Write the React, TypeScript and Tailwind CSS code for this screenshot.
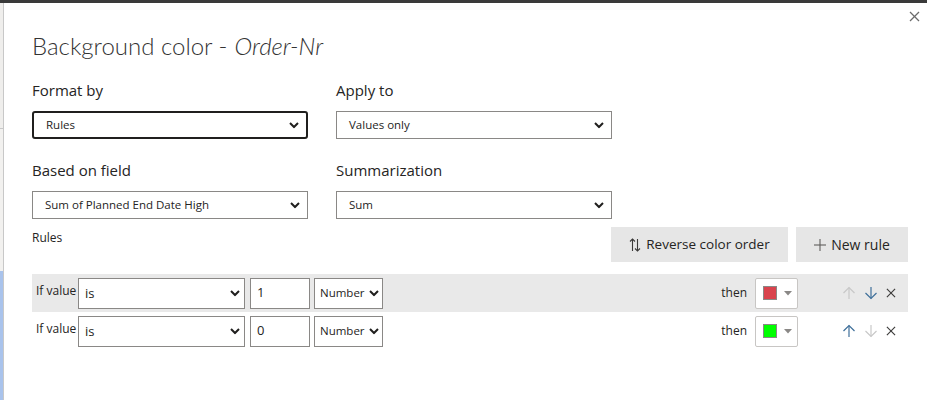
import React from "react";

const font = { fontFamily: '"Open Sans", "Noto Sans", sans-serif' };

const Chevron = ({ className = "" }: { className?: string }) => (
  <svg width="10" height="7" viewBox="0 0 10 7" className={className}>
    <polyline points="1,1.5 5,5.5 9,1.5" fill="none" stroke="#201f1e" strokeWidth="2" />
  </svg>
);

const Select = ({ value, focused = false }: { value: string; focused?: boolean }) => (
  <div
    className={`relative h-[28px] w-[276px] flex items-center pl-[12px] text-[11.5px] text-[#252423] bg-white ${
      focused ? "border-2 border-[#201f1e] rounded-[3px] pl-[11px]" : "border border-[#8a8886]"
    }`}
  >
    {value}
    <Chevron className="absolute right-[7px] top-1/2 -translate-y-1/2" />
  </div>
);

const Field = ({ label, value, focused }: { label: string; value: string; focused?: boolean }) => (
  <div className="flex flex-col">
    <div className="h-[20px] flex items-center text-[15px] text-[#252423]">{label}</div>
    <div className="mt-[11px]">
      <Select value={value} focused={focused} />
    </div>
  </div>
);

const Arrow = ({ dir, enabled }: { dir: "up" | "down"; enabled: boolean }) => (
  <svg width="14" height="14" viewBox="0 0 14 14" className={dir === "down" ? "rotate-180" : ""}>
    <g fill="none" stroke={enabled ? "#3e6f9a" : "#c8c8c8"} strokeWidth="1.2">
      <line x1="7" y1="1.5" x2="7" y2="13" />
      <polyline points="1.5,7 7,1.5 12.5,7" />
    </g>
  </svg>
);

const Cross = ({ size = 11, color = "#3b3a39" }: { size?: number; color?: string }) => (
  <svg width={size} height={size} viewBox="0 0 11 11">
    <g stroke={color} strokeWidth="1.2">
      <line x1="1" y1="1" x2="10" y2="10" />
      <line x1="10" y1="1" x2="1" y2="10" />
    </g>
  </svg>
);

const RuleRow = ({
  value,
  color,
  upEnabled,
  downEnabled,
  shaded,
}: {
  value: string;
  color: string;
  upEnabled: boolean;
  downEnabled: boolean;
  shaded?: boolean;
}) => (
  <div className={`h-[38px] w-[876px] flex items-center ${shaded ? "bg-[#e9e9e9]" : "bg-white"}`}>
    <span className="ml-[4px] w-[42px] text-[12px] text-[#252423] -mt-[4px]">If value</span>
    <div className="relative h-[31px] w-[167px] border border-[#8a8886] bg-white flex items-center pl-[6px] text-[13px] text-[#252423] pt-[2px]">
      is
      <Chevron className="absolute right-[4px] top-1/2 -translate-y-1/2" />
    </div>
    <div className="ml-[5px] h-[31px] w-[60px] border border-[#8a8886] bg-white flex items-center pl-[6px] text-[13px] text-[#252423]">
      {value}
    </div>
    <div className="relative ml-[4px] h-[31px] w-[69px] border border-[#8a8886] bg-white flex items-center pl-[5px] text-[11.5px] text-[#252423]">
      Number
      <Chevron className="absolute right-[3px] top-1/2 -translate-y-1/2" />
    </div>
    <div className="flex-1" />
    <span className="text-[12px] text-[#252423]">then</span>
    <div className="ml-[8px] h-[31px] w-[43px] border border-[#c8c6c4] rounded-[2px] bg-white flex items-center pl-[7px]">
      <div className="w-[14px] h-[14px] border border-[#8a8886]" style={{ backgroundColor: color }} />
      <svg width="8" height="5" viewBox="0 0 8 5" className="ml-[7px]">
        <polygon points="0,0 8,0 4,4.5" fill="#8a8886" />
      </svg>
    </div>
    <div className="ml-[44px] flex items-center gap-[8px] mr-[12px]">
      <Arrow dir="up" enabled={upEnabled} />
      <Arrow dir="down" enabled={downEnabled} />
      <Cross size={10} />
    </div>
  </div>
);

export default function App() {
  return (
    <div className="w-[927px] h-[400px] bg-white flex flex-col overflow-hidden relative" style={font}>
      <div className="h-[3px] bg-[#3a3a3a] shrink-0" />
      <div className="flex flex-1">
        <div className="w-[4px] flex flex-col border-r border-[#c8c8c8]">
          <div className="h-[125px] bg-[#efeeec]" />
          <div className="h-[1px] bg-[#c8c8c8]" />
          <div className="h-[142px] bg-[#f2f1ef]" />
          <div className="flex-1 bg-[#a9c3ec]" />
        </div>

        <div className="flex-1 pl-[28px] flex flex-col">
          <div
            className="mt-[27px] h-[32px] flex items-center text-[24px] font-light text-[#333333]"
            style={{ fontFamily: '"Lato", "Open Sans", sans-serif' }}
          >
            Background color - <span className="italic ml-[7px]">Order-Nr</span>
          </div>

          <div className="mt-[18px] flex gap-[28px]">
            <Field label="Format by" value="Rules" focused />
            <Field label="Apply to" value="Values only" />
          </div>
          <div className="mt-[21px] flex gap-[28px]">
            <Field label="Based on field" value="Sum of Planned End Date High" />
            <Field label="Summarization" value="Sum" />
          </div>

          <div className="mt-[8px] w-[876px] flex items-start">
            <div className="h-[22px] flex items-center text-[12px] text-[#252423]">Rules</div>
            <div className="flex-1" />
            <button className="h-[35px] w-[177px] bg-[#e6e6e6] flex items-center justify-center gap-[5px] text-[13.5px] text-[#252423]">
              <svg width="12" height="14" viewBox="0 0 12 14">
                <g fill="none" stroke="#3b3a39" strokeWidth="1.1">
                  <line x1="3.5" y1="1" x2="3.5" y2="13" />
                  <polyline points="1,3.5 3.5,1 6,3.5" />
                  <line x1="8.5" y1="1" x2="8.5" y2="13" />
                  <polyline points="6,10.5 8.5,13 11,10.5" />
                </g>
              </svg>
              Reverse color order
            </button>
            <button className="ml-[8px] h-[35px] w-[112px] bg-[#e6e6e6] flex items-center justify-center gap-[5px] text-[14px] text-[#252423]">
              <svg width="12" height="12" viewBox="0 0 12 12">
                <g stroke="#605e5c" strokeWidth="1.1">
                  <line x1="6" y1="0" x2="6" y2="12" />
                  <line x1="0" y1="6" x2="12" y2="6" />
                </g>
              </svg>
              New rule
            </button>
          </div>

          <div className="mt-[12px] flex flex-col">
            <RuleRow value="1" color="#d9434d" upEnabled={false} downEnabled shaded />
            <RuleRow value="0" color="#00ff00" upEnabled downEnabled={false} />
          </div>
        </div>
      </div>

      <div className="absolute top-[11px] right-[7px]">
        <Cross size={11} color="#6b6b6b" />
      </div>
    </div>
  );
}
